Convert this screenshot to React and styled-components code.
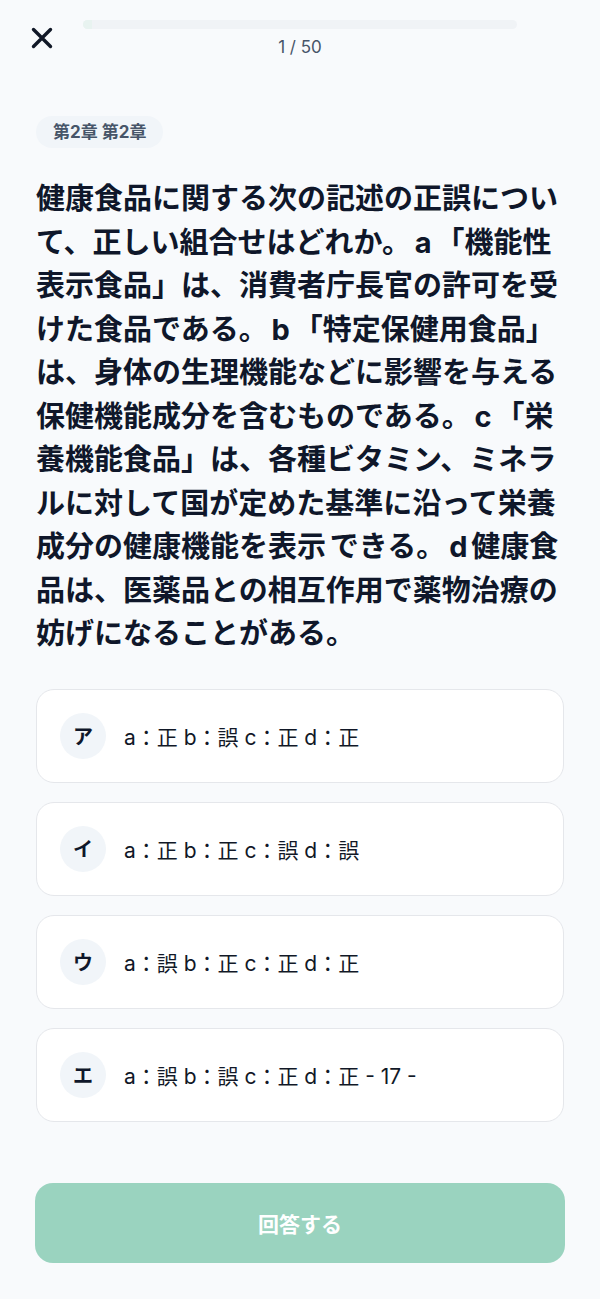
import React from "react";
import styled, { createGlobalStyle } from "styled-components";

const GlobalStyle = createGlobalStyle`
	* {
		box-sizing: border-box;
	}
	body {
		margin: 0;
		background: #f8fafc;
		font-family: Inter, "Noto Sans CJK JP", sans-serif;
		color: #0f172a;
	}
`;

const Page = styled.div`
	min-height: 1299px;
	display: flex;
	flex-direction: column;
	padding-bottom: 36px;
`;

const Header = styled.header`
	display: grid;
	grid-template-columns: 48px 1fr 48px;
	gap: 17px;
	padding: 20px 18px 0;
`;

const CloseButton = styled.button`
	width: 48px;
	height: 40px;
	border: none;
	background: none;
	padding: 6px 0 0;
	display: flex;
	align-items: flex-start;
	justify-content: center;
	color: #111827;
	cursor: pointer;
`;

const ProgressBox = styled.div`
	display: flex;
	flex-direction: column;
	align-items: center;
	gap: 7px;
`;

const Track = styled.div`
	width: 100%;
	height: 9px;
	border-radius: 5px;
	background: #f0f3f6;
	overflow: hidden;
`;

const Fill = styled.div`
	height: 100%;
	background: #e8f3f0;
`;

const Counter = styled.div`
	font-size: 17px;
	line-height: 22px;
	color: #475569;
`;

const Body = styled.main`
	padding: 0 36px;
	display: flex;
	flex-direction: column;
	flex: 1;
`;

const Tag = styled.span`
	align-self: flex-start;
	margin-top: 56px;
	padding: 6px 17px;
	border-radius: 16px;
	background: #f1f5f9;
	color: #475569;
	font-size: 17px;
	line-height: 20px;
	font-weight: 700;
`;

const Question = styled.p`
	margin: 29px 0 33px;
	font-size: 29px;
	line-height: 43.5px;
	font-weight: 700;
	word-spacing: -3px;
	color: #0f172a;
`;

const Options = styled.div`
	display: flex;
	flex-direction: column;
	gap: 19px;
`;

const Option = styled.button`
	display: flex;
	align-items: center;
	gap: 18px;
	width: 100%;
	height: 94px;
	padding: 0 23px;
	border: 1px solid #e5e7eb;
	border-radius: 18px;
	background: #fff;
	font-family: inherit;
	text-align: left;
	cursor: pointer;
`;

const Badge = styled.span`
	flex: none;
	width: 46px;
	height: 46px;
	border-radius: 50%;
	background: #f1f5f9;
	display: flex;
	align-items: center;
	justify-content: center;
	font-size: 20px;
	font-weight: 700;
	color: #0f172a;
`;

const OptionText = styled.span`
	font-size: 21px;
	color: #111827;
`;

const Footer = styled.div`
	padding: 0 35px;
	margin-top: 61px;
`;

const SubmitButton = styled.button`
	width: 100%;
	height: 80px;
	border: none;
	border-radius: 18px;
	background: #9ad3bf;
	color: #fff;
	font-family: inherit;
	font-size: 21px;
	font-weight: 700;
	cursor: not-allowed;
`;

const question =
	"健康食品に関する次の記述の正誤について、正しい組合せはどれか。 a 「機能性表示食品」は、消費者庁長官の許可を受けた食品である。 b 「特定保健用食品」は、身体の生理機能などに影響を与える保健機能成分を含むものである。 c 「栄養機能食品」は、各種ビタミン、ミネラルに対して国が定めた基準に沿って栄養成分の健康機能を表示 できる。 d 健康食品は、医薬品との相互作用で薬物治療の妨げになることがある。";

const choices = [
	{ key: "ア", text: "a：正 b：誤 c：正 d：正" },
	{ key: "イ", text: "a：正 b：正 c：誤 d：誤" },
	{ key: "ウ", text: "a：誤 b：正 c：正 d：正" },
	{ key: "エ", text: "a：誤 b：誤 c：正 d：正 - 17 -" },
];

function CloseIcon() {
	return (
		<svg width="24" height="24" viewBox="0 0 24 24" fill="none">
			<path d="M3.5 3.5L20.5 20.5M20.5 3.5L3.5 20.5" stroke="currentColor" strokeWidth="3.4" strokeLinecap="round" />
		</svg>
	);
}

export default function App() {
	const current = 1;
	const total = 50;
	return (
		<>
			<GlobalStyle />
			<Page>
				<Header>
					<CloseButton aria-label="閉じる">
						<CloseIcon />
					</CloseButton>
					<ProgressBox>
						<Track>
							<Fill style={{ width: `${(current / total) * 100}%` }} />
						</Track>
						<Counter>
							{current} / {total}
						</Counter>
					</ProgressBox>
					<div />
				</Header>
				<Body>
					<Tag>第2章 第2章</Tag>
					<Question>{question}</Question>
					<Options>
						{choices.map((c) => (
							<Option key={c.key}>
								<Badge>{c.key}</Badge>
								<OptionText>{c.text}</OptionText>
							</Option>
						))}
					</Options>
				</Body>
				<Footer>
					<SubmitButton disabled>回答する</SubmitButton>
				</Footer>
			</Page>
		</>
	);
}
